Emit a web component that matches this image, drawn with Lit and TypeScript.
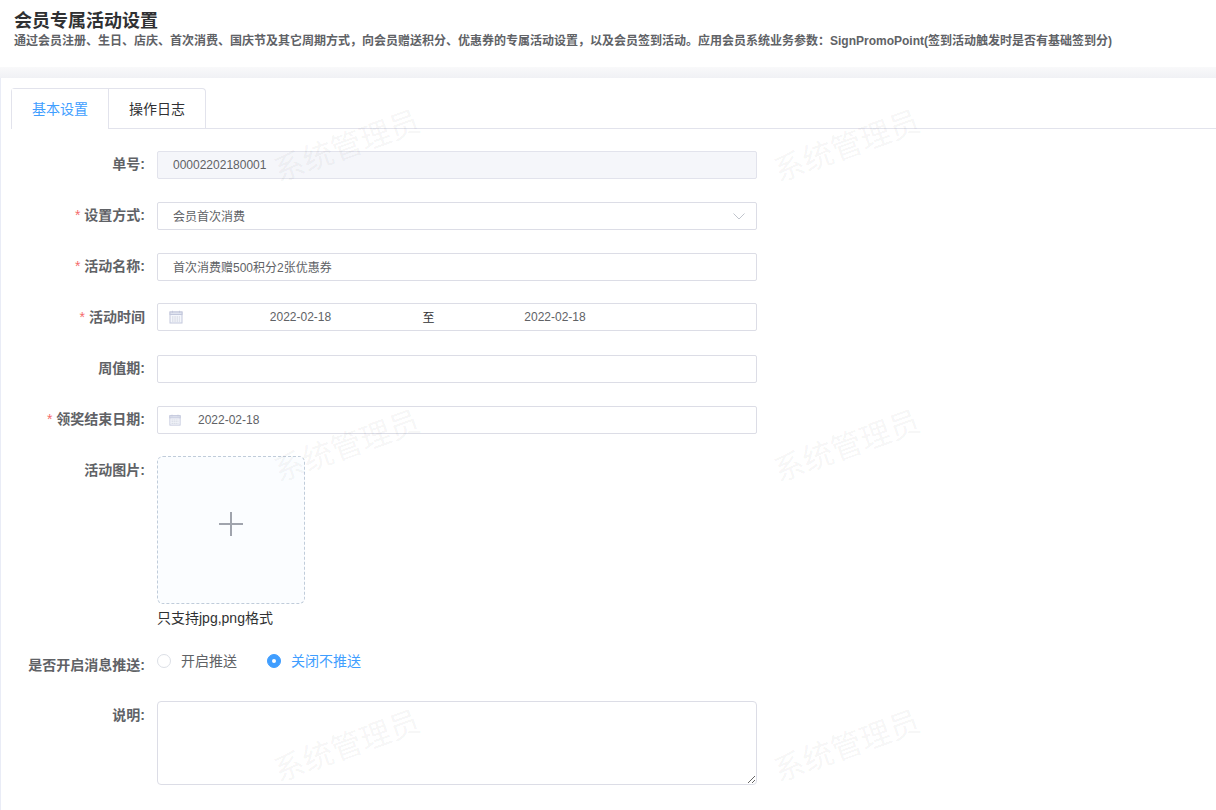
import { LitElement, html, css } from "lit";
import { customElement } from "lit/decorators.js";

const calendar = (w: number) => html`<svg class="cal" width=${w} height=${w} viewBox="0 0 14 14" fill="none">
  <rect x="1" y="2" width="12" height="11" fill="#f4f6fb" stroke="#c3c8dc"/>
  <rect x="1" y="2" width="12" height="2.5" fill="#dfe3ef" stroke="#c3c8dc"/>
  <path d="M3.5 .8v2M10.5 .8v2" stroke="#c3c8dc"/>
  <path d="M3 7h8M3 9h8M3 11h8" stroke="#ccd0dc" stroke-dasharray="1.5 .8"/>
</svg>`;

const SUBTITLE = "通过会员注册、生日、店庆、首次消费、国庆节及其它周期方式\uFF0C向会员赠送积分、优惠券的专属活动设置\uFF0C以及会员签到活动。应用会员系统业务参数\uFF1ASignPromoPoint(签到活动触发时是否有基础签到分)";

@customElement("app-root")
export class AppRoot extends LitElement {
  static styles = css`
    :host { display: block; position: relative; width: 1216px; height: 810px; overflow: hidden; background: #fff;
      font-family: "Liberation Sans", "Noto Sans CJK SC", sans-serif; color: #606266; }
    * { box-sizing: border-box; }
    .head { height: 67px; padding: 11px 14px 0; }
    h1 { margin: 0; font-size: 18px; line-height: 20px; font-weight: 700; color: #303133; }
    .sub { margin: 0; font-size: 12px; line-height: 20px; font-weight: 700; color: #606266; white-space: nowrap; }
    .band { height: 11px; background: linear-gradient(#f9f9fa, #f0f1f5); }
    .card { height: 732px; border-left: 1px solid #e9ecf6; padding: 10px 0 0 10px; }
    .tabs { display: flex; height: 41px; border-bottom: 1px solid #e2e3ec; }
    .tab-group { display: flex; height: 41px; border: 1px solid #e2e3ec; border-bottom: none; border-radius: 4px 4px 0 0; }
    .tab { width: 97px; height: 40px; font-size: 14px; line-height: 40px; text-align: center; color: #303133; }
    .tab.active { width: 96px; }
    .tab + .tab { border-left: 1px solid #e2e3ec; }
    .tab.active { color: #409eff; height: 41px; background: #fff; }
    form { display: block; padding-top: 22px; }
    .row { display: flex; margin-bottom: 23px; }
    .row.tight { margin-bottom: 22px; }
    .row.loose { margin-bottom: 24px; }
    .row.after-hint { margin-bottom: 20px; }
    .label { width: 134px; margin-right: 12px; text-align: right; font-size: 14px; font-weight: 700; line-height: 26px; color: #606266; white-space: nowrap; }
    .label.low { padding-top: 1px; }
    .label i { font-style: normal; font-weight: 400; color: #f56c6c; margin-right: 4px; }
    .field { width: 600px; height: 28px; border: 1px solid #dcdde6; border-radius: 2px; background: #fff; display: flex; align-items: center; padding: 0 15px; font-size: 12px; color: #606266; }
    .field.disabled { background: #f5f6fa; border-color: #e2e3ec; }
    .field.sel { justify-content: space-between; padding-right: 10px; }
    .field.date { padding-left: 11px; }
    .cj { margin-bottom: 2px; }
    .cal { flex: none; }
    .rng { width: 235px; flex: none; text-align: center; }
    .rng.b { width: 232px; }
    .sep { width: 21px; flex: none; text-align: center; color: #303133; }
    .date-single { margin-left: 17px; }
    .up-wrap { display: flex; flex-direction: column; }
    .upload { width: 148px; height: 148px; border: 1px dashed #c0ccda; border-radius: 6px; background: #fbfdff; display: flex; align-items: center; justify-content: center; }
    .plus { margin-bottom: 12px; }
    .hint { font-size: 14px; line-height: 28px; color: #303133; }
    .radios { display: flex; align-items: flex-start; height: 26px; font-size: 14px; line-height: 18px; }
    .radio { display: flex; align-items: center; margin-right: 30px; height: 18px; }
    .dot { width: 14px; height: 14px; border-radius: 50%; border: 1px solid #dcdfe6; margin-right: 10px; background: #fff; display: flex; align-items: center; justify-content: center; }
    .radio.on { color: #409eff; }
    .radio.on .dot { background: #409eff; border-color: #409eff; }
    .radio.on .dot::after { content: ""; width: 4px; height: 4px; border-radius: 50%; background: #fff; }
    textarea { display: block; width: 600px; height: 84px; border: 1px solid #dcdde6; border-radius: 4px; background: transparent; resize: vertical; outline: none; padding: 5px 15px; font: inherit; margin: 0; }
    .wm { position: absolute; left: 0; top: 0; right: 0; bottom: 0; pointer-events: none; display: grid; grid-template-columns: repeat(2, 500px); grid-auto-rows: 300px; padding: 0 0 0 246px; }
    .wm span { display: block; width: 200px; height: 300px; padding-top: 126px; text-align: center; font-size: 30.5px; line-height: 36px; color: rgba(0,0,0,.05); transform-origin: 100px 144px; transform: rotate(-20deg); white-space: nowrap; font-family: "Noto Sans CJK SC", sans-serif; }
  `;

  private lbl(t: string, req = false, low = false) {
    return html`<div class="label ${low ? "low" : ""}">${req ? html`<i>*</i>` : ""}${t}:</div>`;
  }

  render() {
    return html`
      <div class="head">
        <h1>会员专属活动设置</h1>
        <p class="sub">${SUBTITLE}</p>
      </div>
      <div class="band"></div>
      <div class="card">
        <div class="tabs"><div class="tab-group">
          <div class="tab active">基本设置</div><div class="tab">操作日志</div>
        </div></div>
        <form>
          <div class="row">${this.lbl("单号")}<div class="field disabled">00002202180001</div></div>
          <div class="row">${this.lbl("设置方式", true)}<div class="field sel"><span class="cj">会员首次消费</span>
            <svg width="14" height="14" viewBox="0 0 14 14" fill="none"><path d="M1.5 4.5 7 10l5.5-5.5" stroke="#c0c4cc" stroke-width="1"/></svg></div></div>
          <div class="row tight">${this.lbl("活动名称", true)}<div class="field"><span class="cj">首次消费赠500积分2张优惠券</span></div></div>
          <div class="row loose"><div class="label low"><i>*</i>活动时间</div><div class="field date">${calendar(14)}<span class="rng">2022-02-18</span><span class="sep cj">至</span><span class="rng b">2022-02-18</span></div></div>
          <div class="row">${this.lbl("周值期")}<div class="field"></div></div>
          <div class="row tight">${this.lbl("领奖结束日期", true)}<div class="field date">${calendar(12)}<span class="date-single">2022-02-18</span></div></div>
          <div class="row after-hint">${this.lbl("活动图片", false, true)}<div class="up-wrap"><div class="upload">
            <svg class="plus" width="24" height="24" viewBox="0 0 24 24"><path d="M12 0v24M0 12h24" stroke="#a0a4ad" stroke-width="2"/></svg></div>
            <div class="hint">只支持jpg,png格式</div></div></div>
          <div class="row">${this.lbl("是否开启消息推送")}<div class="radios">
            <div class="radio"><span class="dot"></span>开启推送</div>
            <div class="radio on"><span class="dot"></span>关闭不推送</div></div></div>
          <div class="row">${this.lbl("说明", false, true)}<textarea></textarea></div>
        </form>
      </div>
      <div class="wm">${[0, 1, 2, 3, 4, 5].map(() => html`<span>系统管理员</span>`)}</div>
    `;
  }
}
